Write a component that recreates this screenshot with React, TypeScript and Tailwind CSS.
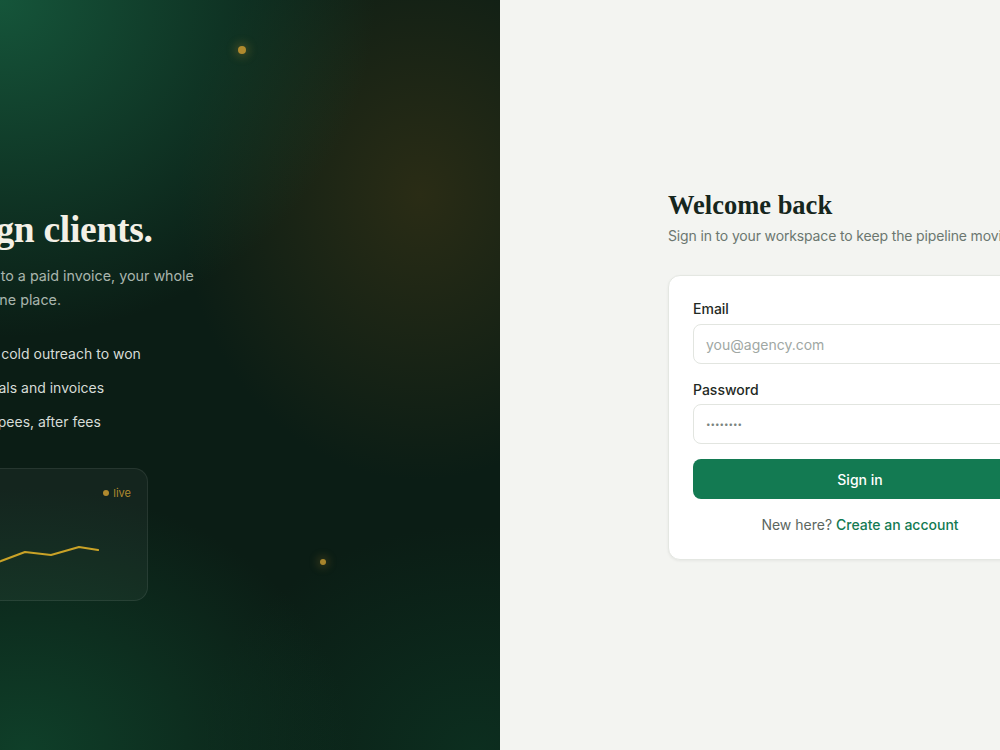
import React from "react";

function Check() {
  return (
    <span className="flex h-[24px] w-[24px] shrink-0 items-center justify-center rounded-full bg-[#c9a227]/15">
      <svg width="14" height="14" viewBox="0 0 24 24" fill="none" stroke="#c9a227" strokeWidth="2.4" strokeLinecap="round" strokeLinejoin="round">
        <path d="M20 6 9 17l-5-5" />
      </svg>
    </span>
  );
}

export default function App() {
  return (
    <div className="flex h-[750px] w-[1000px] overflow-hidden" style={{ fontFamily: "Inter, 'Noto Sans', sans-serif" }}>
      {/* Left panel */}
      <div className="relative h-full w-[500px] overflow-hidden bg-[#0b1d15] bg-[radial-gradient(ellipse_75%_45%_at_0%_0%,#15553a_0%,rgba(21,85,58,0)_100%),radial-gradient(ellipse_48%_38%_at_84%_26%,#2a2c15_0%,rgba(42,44,21,0)_100%),radial-gradient(ellipse_65%_35%_at_5%_100%,#0f3f29_0%,rgba(15,63,41,0)_100%),radial-gradient(ellipse_55%_30%_at_95%_100%,#0c2e1f_0%,rgba(12,46,31,0)_100%)]">
        <span className="absolute left-[238px] top-[46px] h-[8px] w-[8px] rounded-full bg-[#b08a2e] shadow-[0_0_10px_3px_rgba(176,138,46,0.3)]" />
        <span className="absolute left-[320px] top-[559px] h-[6px] w-[6px] rounded-full bg-[#a8852c] shadow-[0_0_8px_3px_rgba(168,133,44,0.25)]" />

        <div className="ml-[-129px] flex w-[460px] flex-col pt-[207px]">
          <h1 className="whitespace-nowrap text-[37.5px] font-bold leading-[46px] tracking-[-0.3px] text-[#f4f0e6]" style={{ fontFamily: "'Liberation Serif', serif" }}>
            Pitch, sign clients.
          </h1>
          <p className="mt-[11px] whitespace-nowrap text-[14.3px] leading-[24px] text-[#a9b5ad]">
            From a cold e-mail to a paid invoice, your whole
            <br />
            business stays in one place.
          </p>
          <ul className="mt-[30px] flex flex-col gap-[10px] text-[14px] leading-[20px] text-[#d6dcd7]">
            <li className="flex items-center gap-[14px] whitespace-nowrap"><Check />Tracked from cold outreach to won</li>
            <li className="flex items-center gap-[14px] whitespace-nowrap"><Check />Smart proposals and invoices</li>
            <li className="flex items-center gap-[14px] whitespace-nowrap"><Check />Get paid in rupees, after fees</li>
          </ul>
          <div className="relative mt-[34px] h-[133px] w-[277px] rounded-[14px] border border-white/[0.08] bg-white/[0.04]">
            <div className="absolute right-[16px] top-[16px] flex items-center gap-[4px] text-[11px] text-[#b08a2e]">
              <span className="h-[6px] w-[6px] rounded-full bg-[#b08a2e]" />
              live
            </div>
            <svg className="absolute left-0 top-0" width="277" height="133" viewBox="0 0 277 133" fill="none">
              <polyline
                points="80,108 129,92 153,83 179,86 207,78 226,81"
                stroke="#c9a227"
                strokeWidth="2.2"
                strokeLinecap="round"
                strokeLinejoin="round"
              />
            </svg>
          </div>
        </div>
      </div>

      {/* Right panel */}
      <div className="flex h-full w-[500px] items-center overflow-hidden bg-[#f3f4f1] pl-[168px]">
        <div className="w-[384px] shrink-0">
          <h2 className="text-[26.5px] font-bold leading-[30px] text-[#16261d]" style={{ fontFamily: "'Liberation Serif', serif" }}>
            Welcome back
          </h2>
          <p className="mt-[6px] whitespace-nowrap text-[14px] leading-[20px] tracking-[-0.15px] text-[#6b7770]">
            Sign in to your workspace to keep the pipeline moving.
          </p>
          <div className="mt-[29px] rounded-[12px] border border-[#e4e7e2] bg-white px-[24px] pb-[24px] pt-[23px] shadow-[0_1px_3px_rgba(16,24,20,0.06)]">
            <label className="block text-[14px] font-medium leading-[20px] text-[#1f2a24]">Email</label>
            <div className="mt-[5px] flex h-[40px] items-center rounded-[8px] border border-[#e2e5e0] px-[12px] text-[14px] text-[#a0a7a3]">
              you@agency.com
            </div>
            <label className="mt-[16px] block text-[14px] font-medium leading-[20px] text-[#1f2a24]">Password</label>
            <div className="mt-[4px] flex h-[40px] items-center rounded-[8px] border border-[#e2e5e0] px-[12px] text-[8px] text-[#7b847f]">
              ••••••••
            </div>
            <button className="mt-[15px] flex h-[40px] w-full items-center justify-center rounded-[8px] bg-[#137a52] text-[14px] font-medium text-white">
              Sign in
            </button>
            <p className="mt-[16px] text-center text-[14px] leading-[20px] text-[#5b6660]">
              New here? <span className="font-medium text-[#137a52]">Create an account</span>
            </p>
          </div>
        </div>
      </div>
    </div>
  );
}
